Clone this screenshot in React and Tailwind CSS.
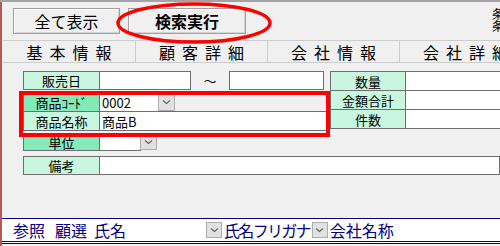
const FONT = "font-['Noto_Sans_CJK_JP','Liberation_Sans',sans-serif]";

const TABS = ["基本情報", "顧客詳細", "会社情報", "会社詳細"];

function Chevron() {
  return (
    <svg width="9" height="6" viewBox="0 0 9 6" fill="none">
      <path d="M1 1.5 L4.5 4.5 L8 1.5" stroke="#606060" strokeWidth="1.1" />
    </svg>
  );
}

function DropBtn({ className = "" }) {
  return (
    <div className={`flex items-center justify-center bg-[#e1e1e1] border border-[#adadad] ${className}`}>
      <Chevron />
    </div>
  );
}

function Label({ children, strong, className = "" }) {
  return (
    <div
      className={`flex items-center justify-center shrink-0 border border-[#6e6e6e] text-[13px] leading-none text-black ${
        strong ? "bg-[#84e9b9]" : "bg-[#c9f6de]"
      } ${className}`}
    >
      {children}
    </div>
  );
}

function Field({ children, className = "" }) {
  return (
    <div className={`flex items-center bg-white border border-[#6e6e6e] -ml-px pl-[2px] text-[13px] leading-none text-black ${className}`}>
      {children}
    </div>
  );
}

export default function App() {
  return (
    <div className={`relative w-[500px] h-[246px] overflow-hidden bg-[#f0f0f0] border-t-2 border-[#a3a3a3] flex ${FONT}`}>
      <div className="w-[2px] shrink-0 bg-[#b25a5a]" />
      <div className="flex-1 flex flex-col min-w-0">
        {/* buttons */}
        <div className="flex items-start mt-[6px] pl-[11px] h-[26px]">
          <button className="w-[107px] h-[26px] border border-[#a0a0a0] bg-[#f0f0f0] shadow-[inset_1px_1px_0_#ffffff,inset_-1px_-1px_0_#d4d4d4] text-[16px] leading-none text-black">
            全て表示
          </button>
          <button className="ml-[8px] w-[118px] h-[26px] border border-[#a0a0a0] bg-[#f0f0f0] shadow-[inset_1px_1px_0_#ffffff,inset_-1px_-1px_0_#d4d4d4] text-[16px] font-bold leading-none text-black">
            検索実行
          </button>
          <div className="ml-auto w-[8px] overflow-hidden text-[12px] leading-[12px] text-black">
            <div className="w-[14px]">条</div>
            <div className="w-[14px]">条</div>
          </div>
        </div>

        {/* tabs */}
        <div className="flex mt-[6px] ml-[1px] h-[23px] border-y border-[#cdcdcd]">
          {TABS.map((t, i) => (
            <div
              key={t}
              className={`w-[132px] shrink-0 flex items-center justify-center pl-[7px] text-[16px] leading-none tracking-[7px] text-black ${
                i > 0 ? "border-l border-[#cdcdcd]" : ""
              }`}
            >
              {t}
            </div>
          ))}
        </div>

        {/* form */}
        <div className="flex mt-[8px] pl-[21px]">
          <div className="flex flex-col w-[323px]">
            <div className="flex h-[19px]">
              <Label className="w-[77px]">販売日</Label>
              <Field className="w-[92px]" />
              <div className="w-[38px] flex items-center justify-center text-[13px] text-black">～</div>
              <Field className="w-[95px] ml-0" />
            </div>
            <div className="flex h-[20px] mt-[2px]">
              <Label strong className="w-[77px]">商品ｺｰﾄﾞ</Label>
              <Field className="w-[60px]">0002</Field>
              <DropBtn className="w-[17px] h-[19px] -ml-px" />
            </div>
            <div className="flex h-[20px] -mt-px">
              <Label className="w-[77px]">商品名称</Label>
              <Field className="w-[229px]">商品B</Field>
            </div>
            <div className="flex h-[18px] mt-[2px]">
              <Label strong className="w-[77px]">単位</Label>
              <Field className="w-[42px]" />
              <DropBtn className="w-[17px] h-[17px] -ml-px" />
            </div>
          </div>
          <div className="flex flex-col ml-[2px]">
            {["数量", "金額合計", "件数"].map((l, i) => (
              <div key={l} className={`flex h-[20px] ${i > 0 ? "-mt-px" : ""}`}>
                <Label className="w-[76px]">{l}</Label>
                <Field className="w-[100px]" />
              </div>
            ))}
          </div>
        </div>

        <div className="flex h-[19px] mt-[5px] pl-[21px]">
          <Label className="w-[77px]">備考</Label>
          <Field className="w-[420px]" />
        </div>

        {/* bottom list header */}
        <div className="mt-[43px] h-[26px] bg-white border-t border-[#000080] border-b-[3px] border-double border-b-[#000080] flex items-center pl-[11px] text-[16px] leading-none text-[#000080]">
          <span>参照</span>
          <span className="ml-[10px]">顧選</span>
          <span className="ml-[7px]">氏名</span>
          <DropBtn className="w-[16px] h-[16px] ml-[80px]" />
          <span className="ml-[2px] tracking-[-1.7px]">氏名フリガナ</span>
          <DropBtn className="w-[16px] h-[16px] ml-[2px]" />
          <span className="ml-[2px]">会社名称</span>
        </div>
      </div>

      {/* annotations */}
      <svg className="absolute left-0 top-0 pointer-events-none" width="500" height="246">
        <ellipse cx="194" cy="21" rx="76" ry="19" fill="none" stroke="#ff0000" strokeWidth="3.5" />
      </svg>
      <div className="absolute left-[19px] top-[89px] w-[311px] h-[46px] border-4 border-[#ff0000] pointer-events-none" />
    </div>
  );
}
